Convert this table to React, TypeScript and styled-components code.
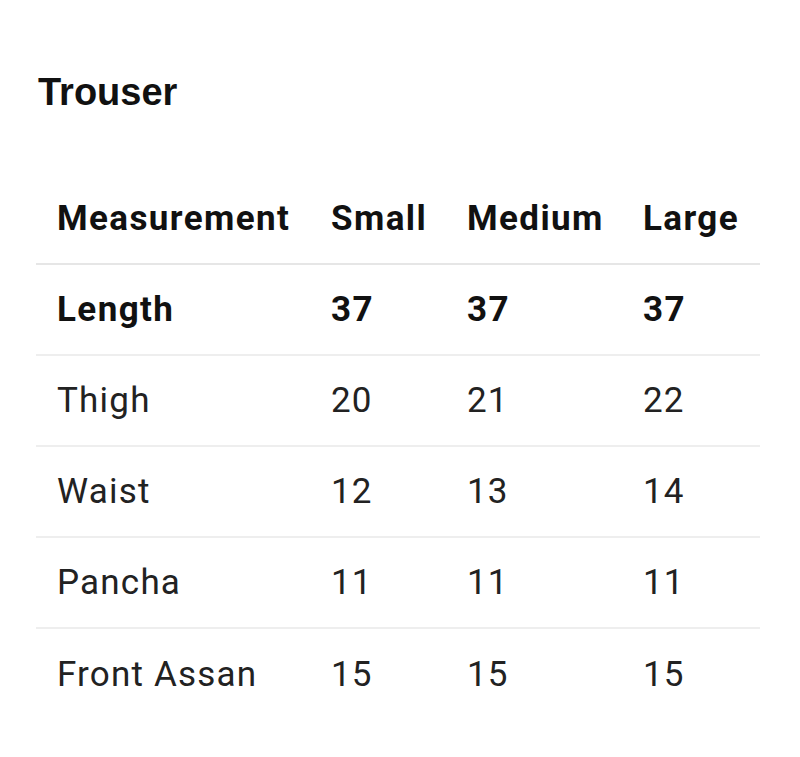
import React from 'react';
import styled, { createGlobalStyle } from 'styled-components';

const GlobalStyle = createGlobalStyle`
  html, body {
    margin: 0;
    padding: 0;
    background: #ffffff;
  }
  body {
    font-family: Roboto, 'Liberation Sans', sans-serif;
    color: #1a1a1a;
  }
`;

const Page = styled.div`
  width: 800px;
  height: 757px;
  padding: 70px 40px 0 36px;
  box-sizing: border-box;
  overflow: hidden;
`;

const Title = styled.h2`
  margin: 0 0 0 2px;
  font-family: 'Liberation Sans', Arial, sans-serif;
  font-weight: 700;
  font-size: 38px;
  line-height: 44px;
  color: #111111;
`;

const Table = styled.table`
  margin-top: 59px;
  width: 724px;
  border-collapse: collapse;
  table-layout: fixed;
`;

const HeadCell = styled.th<{ $w: number }>`
  box-sizing: border-box;
  width: ${p => p.$w}px;
  padding: 0 0 0 21px;
  height: 91px;
  text-align: left;
  font-size: 35px;
  font-weight: 700;
  letter-spacing: 1.4px;
  color: #111111;
  border-bottom: 2px solid #e6e6e6;
  white-space: nowrap;
`;

const Row = styled.tr<{ $last?: boolean }>`
  border-bottom: ${p => (p.$last ? 'none' : '2px solid #eeeeee')};
`;

const Cell = styled.td<{ $bold?: boolean }>`
  box-sizing: border-box;
  padding: 0 0 0 21px;
  height: 91px;
  font-size: 35px;
  font-weight: ${p => (p.$bold ? 700 : 400)};
  letter-spacing: ${p => (p.$bold ? '1.4px' : '1.2px')};
  color: ${p => (p.$bold ? '#111111' : '#222222')};
  white-space: nowrap;
`;

const columns = [
  { label: 'Measurement', width: 274 },
  { label: 'Small', width: 136 },
  { label: 'Medium', width: 176 },
  { label: 'Large', width: 138 },
];

const rows = [
  { name: 'Length', values: ['37', '37', '37'], bold: true },
  { name: 'Thigh', values: ['20', '21', '22'] },
  { name: 'Waist', values: ['12', '13', '14'] },
  { name: 'Pancha', values: ['11', '11', '11'] },
  { name: 'Front Assan', values: ['15', '15', '15'] },
];

export default function App() {
  return (
    <>
      <GlobalStyle />
      <Page>
        <Title>Trouser</Title>
        <Table>
          <thead>
            <tr>
              {columns.map(c => (
                <HeadCell key={c.label} $w={c.width}>
                  {c.label}
                </HeadCell>
              ))}
            </tr>
          </thead>
          <tbody>
            {rows.map((r, i) => (
              <Row key={r.name} $last={i === rows.length - 1}>
                <Cell $bold={r.bold}>{r.name}</Cell>
                {r.values.map((v, j) => (
                  <Cell key={j} $bold={r.bold}>
                    {v}
                  </Cell>
                ))}
              </Row>
            ))}
          </tbody>
        </Table>
      </Page>
    </>
  );
}
